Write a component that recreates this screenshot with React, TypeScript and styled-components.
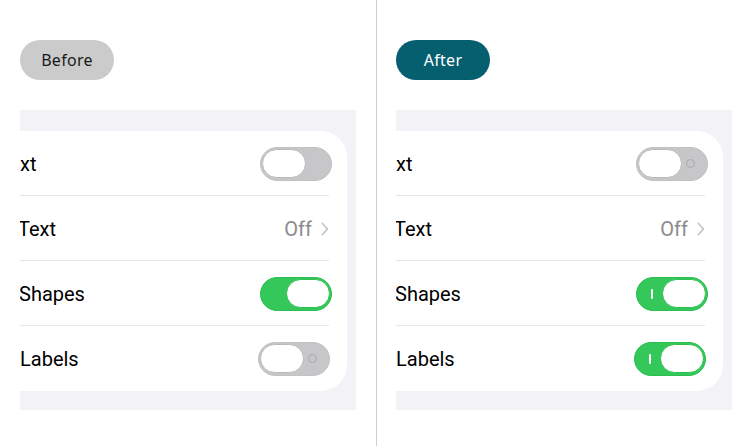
import styled, { createGlobalStyle } from 'styled-components';

const Global = createGlobalStyle`
  html, body {
    margin: 0;
    padding: 0;
    background: #ffffff;
  }
  body {
    font-family: Roboto, "Noto Sans", sans-serif;
  }
`;

const Page = styled.div`
  display: grid;
  grid-template-columns: 376px 1px 375px;
  width: 752px;
  height: 446px;
  overflow: hidden;
`;

const Half = styled.section<{ $right?: boolean }>`
  padding: 40px 0 0 ${(p) => (p.$right ? 19 : 20)}px;
`;

const Divider = styled.div`
  background: #cfcfcf;
  height: 446px;
`;

const Tag = styled.div<{ $dark?: boolean }>`
  width: 94px;
  height: 40px;
  border-radius: 20px;
  display: flex;
  align-items: center;
  justify-content: center;
  background: ${(p) => (p.$dark ? '#055f6e' : '#cbcbcb')};
  color: ${(p) => (p.$dark ? '#ffffff' : '#1a1a1a')};
  font-family: "Noto Sans", sans-serif;
  font-size: 16px;
  letter-spacing: 0.3px;
`;

const Panel = styled.div`
  margin-top: 30px;
  width: 336px;
  height: 300px;
  background: #f2f2f7;
  overflow: hidden;
  padding-top: 21px;
  box-sizing: border-box;
`;

const Card = styled.div`
  margin-left: -40px;
  width: 367px;
  background: #ffffff;
  border-radius: 26px;
`;

const Row = styled.div<{ $last?: boolean }>`
  position: relative;
  height: 65px;
  display: flex;
  align-items: center;
  padding: 0 15px 0 40px;
  &::after {
    content: '';
    display: ${(p) => (p.$last ? 'none' : 'block')};
    position: absolute;
    left: 0;
    right: 18px;
    bottom: 0;
    height: 1.5px;
    background: #e6e6ea;
  }
`;

const Label = styled.span<{ $shift?: number }>`
  flex: 1;
  font-size: 20px;
  color: #000;
  margin-left: ${(p) => p.$shift || 0}px;
`;

const Value = styled.span`
  display: flex;
  align-items: center;
  gap: 9px;
  font-size: 20px;
  color: #8a8a8e;
  margin-right: 3px;
`;

const Track = styled.div<{ $on?: boolean; $nudge?: number }>`
  position: relative;
  width: 72px;
  height: 34px;
  border-radius: 17px;
  box-sizing: border-box;
  background: ${(p) => (p.$on ? '#34c759' : '#c7c7c9')};
  border: 1.5px solid ${(p) => (p.$on ? '#2cbf50' : '#c2c2c4')};
  margin-right: ${(p) => p.$nudge || 0}px;
`;

const Knob = styled.div<{ $on?: boolean }>`
  position: absolute;
  top: 1px;
  ${(p) => (p.$on ? 'right: 1px;' : 'left: 1px;')}
  width: 44px;
  height: 29px;
  box-sizing: border-box;
  border-radius: 15px;
  background: #ffffff;
  border: 1.5px solid ${(p) => (p.$on ? '#2cbf50' : '#b9b9bb')};
`;

const OffMark = styled.div`
  position: absolute;
  right: 12px;
  top: 11px;
  width: 9px;
  height: 9px;
  border-radius: 50%;
  border: 1.5px solid #a9a9ab;
  box-sizing: border-box;
`;

const OnMark = styled.div`
  position: absolute;
  left: 14px;
  top: 11px;
  width: 2px;
  height: 10px;
  border-radius: 1px;
  background: #ffffff;
`;

function Toggle({ on, marks, nudge }: { on?: boolean; marks?: boolean; nudge?: number }) {
  return (
    <Track $on={on} $nudge={nudge}>
      {marks && (on ? <OnMark /> : <OffMark />)}
      <Knob $on={on} />
    </Track>
  );
}

function Chevron() {
  return (
    <svg width="8" height="14" viewBox="0 0 8 14">
      <path d="M1.5 1.5 L6.5 7 L1.5 12.5" fill="none" stroke="#c4c4c7" strokeWidth="1.8" strokeLinecap="round" strokeLinejoin="round" />
    </svg>
  );
}

function Settings({ after }: { after?: boolean }) {
  return (
    <Panel>
      <Card>
        <Row>
          <Label>xt</Label>
          <Toggle marks={after} />
        </Row>
        <Row>
          <Label $shift={-2}>Text</Label>
          <Value>
            Off
            <Chevron />
          </Value>
        </Row>
        <Row>
          <Label $shift={-1}>Shapes</Label>
          <Toggle on marks={after} />
        </Row>
        <Row $last>
          <Label>Labels</Label>
          <Toggle on={after} marks nudge={2} />
        </Row>
      </Card>
    </Panel>
  );
}

export default function App() {
  return (
    <>
      <Global />
      <Page>
        <Half>
          <Tag>Before</Tag>
          <Settings />
        </Half>
        <Divider />
        <Half $right>
          <Tag $dark>After</Tag>
          <Settings after />
        </Half>
      </Page>
    </>
  );
}
